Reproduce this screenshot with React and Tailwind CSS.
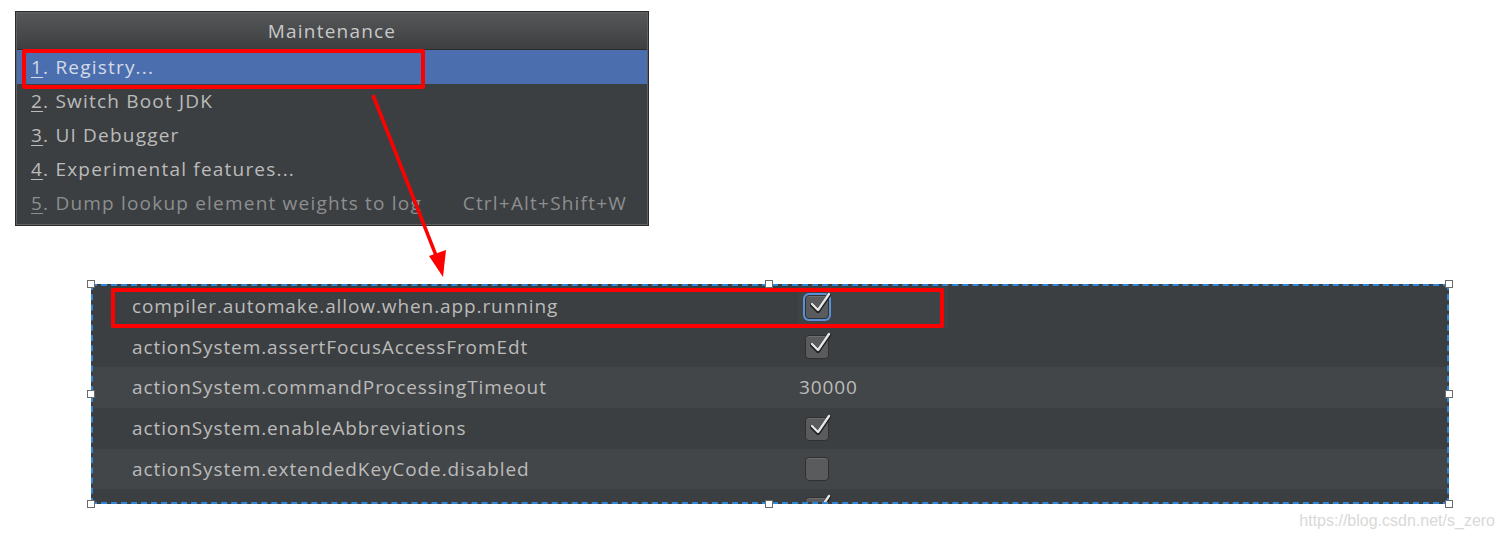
const menuItems = [
  { n: "1", label: ". Registry...", selected: true },
  { n: "2", label: ". Switch Boot JDK" },
  { n: "3", label: ". UI Debugger" },
  { n: "4", label: ". Experimental features..." },
  { n: "5", label: ". Dump lookup element weights to log", dim: true, shortcut: "Ctrl+Alt+Shift+W" },
];

const rows = [
  { key: "compiler.automake.allow.when.app.running", type: "check", on: true, focus: true, bg: "bg-[#3c3f41]", h: "h-[41px]" },
  { key: "actionSystem.assertFocusAccessFromEdt", type: "check", on: true, bg: "bg-[#3c3f41]", h: "h-[40px]" },
  { key: "actionSystem.commandProcessingTimeout", type: "text", value: "30000", bg: "bg-[#434648]", h: "h-[41px]" },
  { key: "actionSystem.enableAbbreviations", type: "check", on: true, bg: "bg-[#3c3f41]", h: "h-[41px]" },
  { key: "actionSystem.extendedKeyCode.disabled", type: "check", on: false, bg: "bg-[#434648]", h: "h-[40px]" },
  { key: "", type: "check", on: true, bg: "bg-[#3c3f41]", h: "h-[40px]" },
];

function CheckBox({ on, focus }) {
  return (
    <div
      className={
        "relative w-[24px] h-[24px] rounded-[4px] bg-[#595b5d] border border-[#2e3031] shadow-[inset_0_1px_0_#6b6d6f] " +
        (focus ? "ring-2 ring-[#5b8fd6]" : "")
      }
    >
      {on && (
        <svg viewBox="0 0 24 24" className="absolute left-[2px] -top-[4px] w-[24px] h-[24px]">
          <path d="M4 13 L10 19 L21 3" fill="none" stroke="#1e1f20" strokeWidth="4" strokeLinecap="round" strokeLinejoin="round" />
          <path d="M4 12 L10 18 L21 2" fill="none" stroke="#e6e6e6" strokeWidth="2.4" strokeLinecap="round" strokeLinejoin="round" />
        </svg>
      )}
    </div>
  );
}

function Handle({ className }) {
  return <div className={"absolute w-[8px] h-[8px] bg-white border border-[#6b6b6b] " + className} />;
}

function Menu() {
  return (
    <div className="relative w-[634px] border border-[#2b2b2b] bg-[#3c3f41] shadow-[inset_0_0_0_1px_#5e6163] p-px tracking-[1.2px]">
      <div className="h-[37px] flex items-center justify-center bg-gradient-to-b from-[#555758] to-[#3d3f41] border-b border-[#2b2b2b] text-[19px] text-[#c8c8c8]">
        Maintenance
      </div>
      <div className="flex flex-col pb-[4px]">
        {menuItems.map((it) => (
          <div
            key={it.n}
            className={
              "h-[34px] flex items-center pl-[14px] pr-[20px] text-[19px] " +
              (it.selected ? "bg-[#4b6eaf] text-[#d5dbe6]" : it.dim ? "text-[#8c8e90]" : "text-[#bbbbbb]")
            }
          >
            <span className="underline underline-offset-[3px]">{it.n}</span>
            <span className="whitespace-nowrap">{it.label}</span>
            {it.shortcut && <span className="ml-auto whitespace-nowrap">{it.shortcut}</span>}
          </div>
        ))}
      </div>
      {/* annotation box */}
      <div className="absolute left-[6px] top-[37px] w-[403px] h-[40px] border-[4px] border-[#ff0000] rounded-[2px]" />
    </div>
  );
}

function Registry() {
  return (
    <div className="relative w-[1358px]">
      <div className="h-[220px] flex flex-col border-2 border-dashed border-[#2f86d6] overflow-hidden bg-[#3c3f41] tracking-[0.9px]">
        {rows.map((r, i) => (
          <div key={i} className={"flex items-center shrink-0 " + r.bg + " " + r.h}>
            <div className="w-[705px] pl-[39px] text-[19px] text-[#bbbbbb] whitespace-nowrap">{r.key}</div>
            <div className={"h-full flex items-center pl-[7px] " + (r.focus ? "bg-[#404345] w-[150px]" : "")}>
              {r.type === "check" ? (
                <CheckBox on={r.on} focus={r.focus} />
              ) : (
                <span className="text-[19px] text-[#bbbbbb] -ml-[6px]">{r.value}</span>
              )}
            </div>
          </div>
        ))}
      </div>
      {/* annotation box + selection handles */}
      <div className="absolute left-[20px] top-[4px] w-[833px] h-[40px] border-[4px] border-[#ff0000] rounded-[2px]" />
      <Handle className="-left-[4px] -top-[4px]" />
      <Handle className="left-[674px] -top-[4px]" />
      <Handle className="-right-[4px] -top-[4px]" />
      <Handle className="-left-[4px] top-[106px]" />
      <Handle className="-right-[4px] top-[106px]" />
      <Handle className="-left-[4px] -bottom-[4px]" />
      <Handle className="left-[674px] -bottom-[4px]" />
      <Handle className="-right-[4px] -bottom-[4px]" />
    </div>
  );
}

export default function App() {
  return (
    <div
      className="relative w-[1504px] h-[541px] flex flex-col bg-white overflow-hidden"
      style={{ fontFamily: '"Open Sans", "Noto Sans", sans-serif' }}
    >
      <div className="flex pt-[11px] pl-[15px]">
        <Menu />
      </div>
      <div className="flex pt-[58px] pl-[91px]">
        <Registry />
      </div>
      <div className="flex justify-end pr-[9px] pt-[5px] text-[16px] text-[#d9d9d9]" style={{ fontFamily: '"Liberation Sans", Arial, sans-serif' }}>
        https://blog.csdn.net/s_zero
      </div>
      <svg className="absolute left-0 top-0 pointer-events-none" width="1504" height="541">
        <line x1="373" y1="95" x2="437" y2="258" stroke="#ff0000" strokeWidth="3.5" />
        <polygon points="443,277 429,256 446,250" fill="#ff0000" />
      </svg>
    </div>
  );
}
